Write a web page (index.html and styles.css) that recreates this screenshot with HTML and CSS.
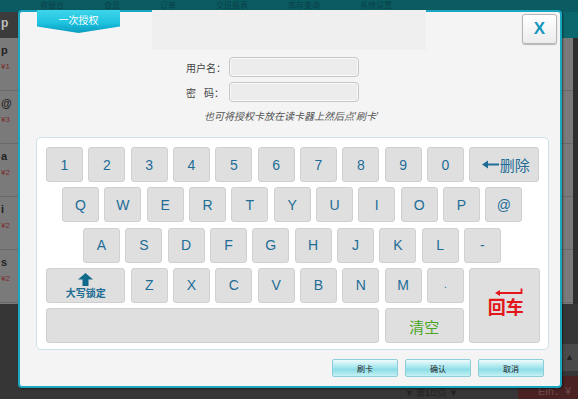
FILE: index.html
```html
<!DOCTYPE html>
<html lang="zh-CN">
<head>
    <meta charset="UTF-8">
    <title>一次授权</title>
    <link rel="stylesheet" href="styles.css">
</head>
<body>
    <div class="app">
        <div class="app-top">
            <span>收银台</span><span>会员</span><span>订单</span><span>交班报表</span><span>库存查询</span><span>系统设置</span>
        </div>
        <div class="app-sub">
            <div class="sub-left">p</div>
            <div class="sub-right"></div>
        </div>
        <div class="app-body">
            <div class="goods-list">
                <div class="goods-row"><b>p</b><i>¥1</i></div>
                <div class="goods-row"><b>@</b><i>¥3</i></div>
                <div class="goods-row"><b>a</b><i>¥2</i></div>
                <div class="goods-row"><b>i</b><i>¥2</i></div>
                <div class="goods-row"><b>s</b><i>¥2</i></div>
            </div>
            <div class="scroll-gap"></div>
        </div>
        <div class="app-foot">
            <div class="pager">▼ 第1/2页 ▼</div>
            <div class="foot-right">
                <div class="up-btn">▲</div>
                <div class="total">Ein：¥</div>
            </div>
        </div>
    </div>

    <!-- fenêtre d'autorisation -->
    <div class="dialog">
        <div class="dialog-head">
            <div class="tab">一次授权</div>
            <div class="head-blank"></div>
            <button class="close-btn">X</button>
        </div>

        <div class="login-form">
            <div class="form-row">
                <label>用户名：</label>
                <input type="text">
            </div>
            <div class="form-row">
                <label>密<span class="gap"></span>码：</label>
                <input type="password">
            </div>
        </div>

        <p class="hint">也可将授权卡放在读卡器上然后点'刷卡'</p>

        <div class="keyboard">
            <div class="keys">
                <div class="key">1</div>
                <div class="key">2</div>
                <div class="key">3</div>
                <div class="key">4</div>
                <div class="key">5</div>
                <div class="key">6</div>
                <div class="key">7</div>
                <div class="key">8</div>
                <div class="key">9</div>
                <div class="key">0</div>
                <div class="key del">
                    <svg width="17" height="9" viewBox="0 0 17 9"><path d="M5 4.5H17" stroke="#1d6d97" stroke-width="2"/><polygon points="0,4.5 6,0.5 6,8.5" fill="#1d6d97"/></svg>
                    <span>删除</span>
                </div>

                <div class="key-row row-q">
                    <div class="key">Q</div>
                    <div class="key">W</div>
                    <div class="key">E</div>
                    <div class="key">R</div>
                    <div class="key">T</div>
                    <div class="key">Y</div>
                    <div class="key">U</div>
                    <div class="key">I</div>
                    <div class="key">O</div>
                    <div class="key">P</div>
                    <div class="key">@</div>
                </div>

                <div class="key-row row-a">
                    <div class="key">A</div>
                    <div class="key">S</div>
                    <div class="key">D</div>
                    <div class="key">F</div>
                    <div class="key">G</div>
                    <div class="key">H</div>
                    <div class="key">J</div>
                    <div class="key">K</div>
                    <div class="key">L</div>
                    <div class="key">-</div>
                </div>

                <div class="key caps">
                    <svg width="15" height="13" viewBox="0 0 15 13"><polygon points="7.5,0 15,6.5 10.5,6.5 10.5,13 4.5,13 4.5,6.5 0,6.5" fill="#0f6a8c"/></svg>
                    <span>大写锁定</span>
                </div>
                <div class="key">Z</div>
                <div class="key">X</div>
                <div class="key">C</div>
                <div class="key">V</div>
                <div class="key">B</div>
                <div class="key">N</div>
                <div class="key">M</div>
                <div class="key dot">.</div>
                <div class="key enter">
                    <svg width="28" height="8" viewBox="0 0 28 8"><path d="M26.5 0.5V5H4" stroke="#e3161b" stroke-width="1.8" fill="none"/><polygon points="0,5 5,2 5,8" fill="#e3161b"/></svg>
                    <span>回车</span>
                </div>

                <div class="key space"></div>
                <div class="key clear">清空</div>
            </div>
        </div>

        <div class="actions">
            <button class="act-btn">刷卡</button>
            <button class="act-btn">确认</button>
            <button class="act-btn">取消</button>
        </div>
    </div>
</body>
</html>
```

FILE: styles.css
```css
* {
    margin: 0;
    padding: 0;
    box-sizing: border-box;
    font-family: 'Liberation Sans', 'Noto Sans CJK SC', sans-serif;
}

body {
    width: 578px;
    height: 399px;
    overflow: hidden;
    background-color: #333;
}

/* Application en arrière-plan */
.app {
    width: 578px;
    height: 399px;
    display: flex;
    flex-direction: column;
}

.app-top {
    height: 12px;
    background-color: #0b5c62;
    display: flex;
    gap: 40px;
    padding-left: 40px;
    font-size: 8px;
    line-height: 12px;
    color: #084247;
    overflow: hidden;
}

.app-sub {
    height: 26px;
    display: flex;
}

.sub-left {
    flex: 1;
    background-color: #3b3b3b;
    color: #bdbdbd;
    font-size: 12px;
    font-weight: bold;
    padding: 4px 0 0 1px;
}

.sub-right {
    width: 220px;
    background-color: #0c676d;
}

.app-body {
    height: 267px;
    display: flex;
}

.goods-list {
    width: 573px;
    background-color: #7a7a7a;
}

.goods-row {
    height: 53px;
    border-bottom: 1px solid #6a6a6a;
    padding: 6px 0 0 1px;
    display: flex;
    flex-direction: column;
    gap: 6px;
}

.goods-row b {
    font-size: 11px;
    color: #222;
    line-height: 12px;
}

.goods-row i {
    font-style: normal;
    font-size: 8px;
    color: #7a2a2a;
    line-height: 10px;
}

.scroll-gap {
    width: 5px;
    background-color: #2e2e2e;
}

.app-foot {
    flex: 1;
    display: flex;
    justify-content: flex-end;
    background-color: #363636;
}

.pager {
    font-size: 9px;
    color: #222;
    margin: 82px 60px 0 0;
}

.foot-right {
    width: 60px;
    display: flex;
    flex-direction: column;
    padding-top: 40px;
}

.up-btn {
    height: 27px;
    background-color: #4a4a4a;
    color: #222;
    font-size: 9px;
    text-align: right;
    padding: 8px 4px 0 0;
}

.total {
    flex: 1;
    margin-top: 5px;
    background-color: #4a2222;
    border-radius: 10px 0 0 0;
    color: #6e4a4a;
    font-size: 11px;
    padding: 6px 0 0 20px;
}

/* Fenêtre modale */
.dialog {
    position: absolute;
    left: 18px;
    top: 10px;
    width: 544px;
    height: 378px;
    background-color: #f4f4f4;
    border: 2px solid #19a7c1;
    border-radius: 4px;
    box-shadow: 1px 1px 2px rgba(0, 0, 0, 0.5);
}

.dialog-head {
    height: 38px;
    display: flex;
    align-items: flex-start;
}

.tab {
    width: 83px;
    height: 23px;
    margin: -2px 0 0 17px;
    background: linear-gradient(#3dd5eb 0%, #20c3df 55%, #13b0d0 75%, #0a9dbf 100%);
    clip-path: polygon(0 0, 100% 0, 100% 72%, 50% 100%, 0 72%);
    color: #fff;
    font-size: 10px;
    line-height: 13px;
    padding-top: 4px;
    text-align: center;
}

.head-blank {
    width: 274px;
    height: 40px;
    margin: -2px 0 0 32px;
    background-color: #efefef;
}

.close-btn {
    width: 35px;
    height: 30px;
    margin: 2px 3px 0 auto;
    background: linear-gradient(#ffffff, #ececec);
    border: 1px solid #b5b5b5;
    border-radius: 3px;
    box-shadow: 0 1px 1px rgba(0, 0, 0, 0.25);
    color: #1597bf;
    font-size: 17px;
    font-weight: bold;
    line-height: 26px;
}

/* Formulaire */
.login-form {
    margin: 7px 0 0 166px;
    display: flex;
    flex-direction: column;
    gap: 5px;
}

.form-row {
    display: flex;
    align-items: center;
    height: 20px;
}

.form-row label {
    width: 43px;
    font-size: 10px;
    color: #444;
    display: flex;
}

.form-row .gap {
    width: 8px;
}

.form-row input {
    width: 130px;
    height: 20px;
    background-color: #ececec;
    border: 1px solid #c6c6c6;
    border-radius: 4px;
    box-shadow: inset 0 0 0 1px #f9f9f9;
}

.hint {
    margin-top: 8px;
    height: 14px;
    font-size: 10px;
    line-height: 14px;
    font-style: italic;
    color: #555;
    text-align: center;
    padding-left: 2px;
}

/* Clavier virtuel */
.keyboard {
    width: 513px;
    height: 213px;
    margin: 13px 0 0 16px;
    background-color: #fff;
    border: 1px solid #cbe2ea;
    border-radius: 5px;
    padding: 9px 0 0 9px;
}

.keys {
    display: grid;
    grid-template-columns: repeat(10, 37px) 70px;
    grid-auto-rows: 35px;
    column-gap: 5.33px;
    row-gap: 5.25px;
}

.key-row {
    grid-column: 1 / -1;
    display: flex;
    gap: 5.33px;
}

.key-row.row-q {
    padding-left: 16px;
}

.key-row.row-a {
    padding-left: 37px;
}

.key {
    width: 37px;
    height: 35px;
    background-color: #dfdfdf;
    border: 1px solid #d0d0d0;
    border-radius: 3px;
    color: #1d6d97;
    font-size: 14px;
    display: flex;
    align-items: center;
    justify-content: center;
}

.key.del {
    width: 70px;
    font-size: 15px;
    gap: 1px;
    padding-left: 3px;
}

.key.dot {
    font-size: 10px;
    padding-bottom: 2px;
}

.key.caps {
    grid-column: span 2;
    width: auto;
    flex-direction: column;
    gap: 2px;
    padding-top: 2px;
}

.key.caps span {
    font-size: 10px;
    font-weight: bold;
    color: #1b6c92;
    line-height: 11px;
}

.key.enter {
    grid-column: 11;
    grid-row: span 2;
    width: 71px;
    height: auto;
    flex-direction: column;
    gap: 2px;
    padding: 0 0 4px 2px;
}

.key.enter svg {
    margin-left: 6px;
}

.key.enter span {
    color: #e3161b;
    font-size: 18px;
    font-weight: bold;
    line-height: 20px;
}

.key.space {
    grid-column: span 8;
    width: auto;
}

.key.clear {
    grid-column: span 2;
    width: auto;
    color: #4aa61e;
    font-size: 15px;
    padding-top: 2px;
}

/* Boutons du bas */
.actions {
    display: flex;
    justify-content: flex-end;
    gap: 7px;
    margin: 9px 16px 0 0;
}

.act-btn {
    width: 66px;
    height: 18px;
    background: linear-gradient(#effcfd 0%, #a6e6ee 45%, #8edde7 60%, #c4f1f5 100%);
    border: 1px solid #8ccdd6;
    border-radius: 2px;
    color: #222;
    font-size: 8px;
}
```
